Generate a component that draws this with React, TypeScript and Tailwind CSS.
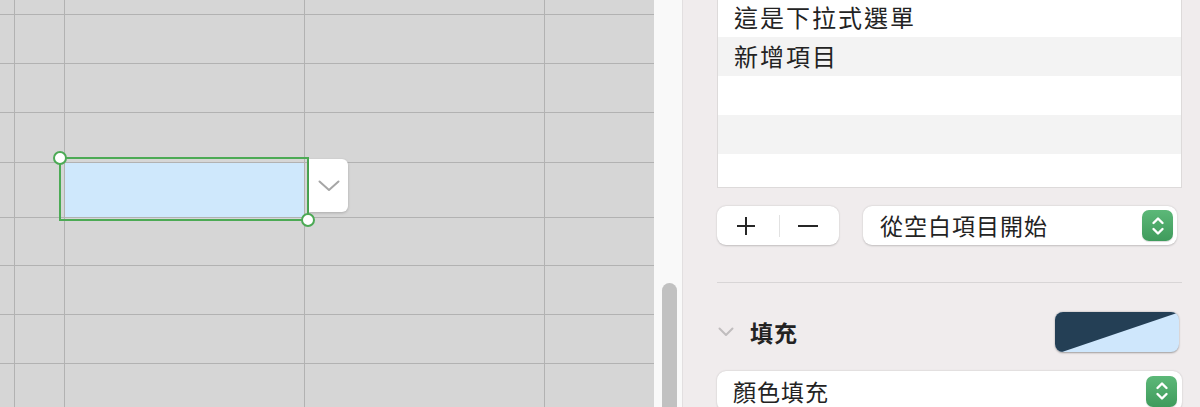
import React from "react";

const font = { fontFamily: '"Noto Sans CJK TC", "Noto Sans", sans-serif' };

const colTracks = "grid-cols-[14px_49px_239px_239px_1fr]";
const rowTracks = "grid-rows-[14px_48px_48px_49px_54px_47px_48px_48px_1fr]";

function Stepper() {
  return (
    <span className="w-[31px] h-[31px] rounded-[7px] bg-gradient-to-b from-[#5cb878] to-[#3f9b5c] flex items-center justify-center shadow-[0_1px_1px_rgba(0,0,0,0.15)]">
      <svg width="14" height="20" viewBox="0 0 14 20" fill="none" stroke="white" strokeWidth="2.4" strokeLinecap="round" strokeLinejoin="round">
        <path d="M2.5 7 L7 2.5 L11.5 7" />
        <path d="M2.5 13 L7 17.5 L11.5 13" />
      </svg>
    </span>
  );
}

function Sheet() {
  const cells = Array.from({ length: 45 }, (_, i) => i);
  return (
    <div className="relative w-[654px] h-full shrink-0 overflow-hidden">
      <div className={`grid ${colTracks} ${rowTracks} gap-px bg-[#b2b2b2] h-full`}>
        {cells.map((i) => (
          <div key={i} className={i === 22 ? "bg-[#cfe8fc]" : "bg-[#d6d6d6]"} />
        ))}
      </div>
      {/* selection border */}
      <div className="absolute left-[59px] top-[157px] w-[250px] h-[64px] border-2 border-[#4caa55]" />
      <span className="absolute left-[53px] top-[151px] w-[14px] h-[14px] rounded-full bg-white border-2 border-[#4caa55]" />
      <span className="absolute left-[301px] top-[213px] w-[14px] h-[14px] rounded-full bg-white border-2 border-[#4caa55]" />
      {/* cell popup button */}
      <div className="absolute left-[309px] top-[159px] w-[39px] h-[53px] bg-white rounded-r-[6px] shadow-[0_1px_3px_rgba(0,0,0,0.2)] flex items-center justify-center">
        <svg width="22" height="12" viewBox="0 0 22 12" fill="none" stroke="#a6a6a6" strokeWidth="2" strokeLinecap="round" strokeLinejoin="round">
          <path d="M1.5 1.5 L11 10 L20.5 1.5" />
        </svg>
      </div>
    </div>
  );
}

function Inspector() {
  const rows = ["這是下拉式選單", "新增項目", "", "", ""];
  return (
    <div className="flex-1 h-full bg-[#f0eced] border-l border-[#e2dfe0] pl-[34px] pr-[18px] text-[#232323]" style={font}>
      <div className="-mt-[2px] bg-white border border-[#dddada] border-t-0">
        {rows.map((r, i) => (
          <div
            key={i}
            className={`${i === 4 ? "h-[33px]" : "h-[39px]"} ${i % 2 ? "bg-[#f3f3f3]" : "bg-white"} flex items-center pl-4 pb-[1px] text-[24px] tracking-[2px] leading-none`}
          >
            {r}
          </div>
        ))}
      </div>

      <div className="mt-[18px] h-[39px] flex items-center gap-6">
        <div className="w-[122px] h-full bg-white rounded-[9px] shadow-[0_0.5px_2px_rgba(0,0,0,0.2)] flex items-center">
          <span className="flex-1 flex items-center justify-center pr-[4px]">
            <svg width="20" height="20" viewBox="0 0 20 20" stroke="#262626" strokeWidth="2">
              <path d="M10 1 V19 M1 10 H19" />
            </svg>
          </span>
          <span className="w-px h-[22px] bg-[#e2e2e2]" />
          <span className="flex-1 flex items-center justify-center pr-[2px]">
            <svg width="22" height="4" viewBox="0 0 22 4" stroke="#262626" strokeWidth="2">
              <path d="M1 2 H21" />
            </svg>
          </span>
        </div>
        <div className="w-[314px] h-full bg-white rounded-[9px] shadow-[0_0.5px_2px_rgba(0,0,0,0.2)] flex items-center justify-between pl-[17px] pr-[4px]">
          <span className="text-[23px] tracking-[1px] leading-none">從空白項目開始</span>
          <Stepper />
        </div>
      </div>

      <div className="mt-[37px] h-px bg-[#d8d5d6]" />

      <div className="mt-[29px] h-[40px] flex items-center">
        <svg width="16" height="10" viewBox="0 0 16 10" fill="none" stroke="#c0bdbe" strokeWidth="2" strokeLinecap="round" strokeLinejoin="round" className="ml-[1px]">
          <path d="M1.5 1.5 L8 8 L14.5 1.5" />
        </svg>
        <span className="ml-[16px] text-[23px] font-bold tracking-[1px] leading-none">填充</span>
        <div className="ml-auto mr-[3px] w-[124px] h-[40px] rounded-[8px] overflow-hidden shadow-[0_0.5px_2px_rgba(0,0,0,0.35)] bg-[#cfe7fc]">
          <svg width="124" height="40" viewBox="0 0 124 40" preserveAspectRatio="none">
            <polygon points="0,0 124,0 122,1 7,40 0,40" fill="#243f55" />
          </svg>
        </div>
      </div>

      <div className="mt-[19px] h-[40px] bg-white rounded-[9px] shadow-[0_0.5px_2px_rgba(0,0,0,0.2)] flex items-center justify-between pl-[16px] pr-[5px]">
        <span className="text-[23px] tracking-[1px] leading-none">顏色填充</span>
        <Stepper />
      </div>
    </div>
  );
}

export default function App() {
  return (
    <div className="w-[1200px] h-[407px] flex overflow-hidden bg-[#f0eced]">
      <Sheet />
      <div className="relative w-[28px] h-full shrink-0 bg-[#f9f9f9]">
        <div className="absolute left-[8px] top-[283px] w-[15px] h-[140px] rounded-full bg-[#c1c1c1]" />
      </div>
      <Inspector />
    </div>
  );
}
